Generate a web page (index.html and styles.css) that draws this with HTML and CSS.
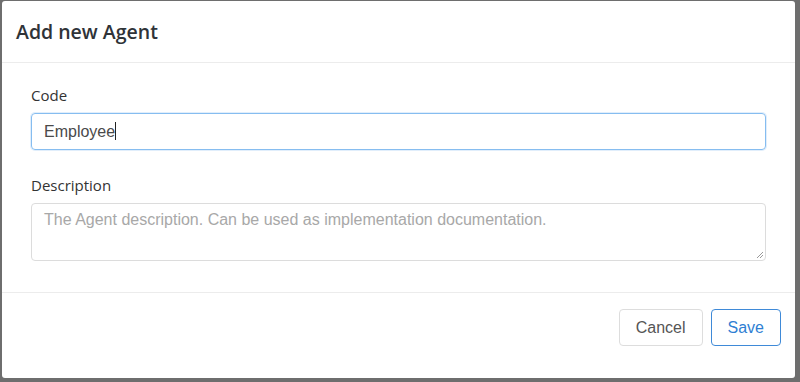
FILE: index.html
```html
<!DOCTYPE html>
<html lang="en">
<head>
<meta charset="utf-8">
<title>Add new Agent</title>
<link rel="stylesheet" href="styles.css">
</head>
<body>

<div class="modal">
	<div class="modal-header">
		<h5 class="modal-title">Add new Agent</h5>
	</div>
	<div class="modal-body">
		<div class="field">
			<label class="field-label">Code</label>
			<div class="input focus">Employee<span class="caret"></span></div>
		</div>
		<div class="field">
			<label class="field-label">Description</label>
			<div class="textarea">
				<span class="placeholder">The Agent description. Can be used as implementation documentation.</span>
				<svg class="grip" width="9" height="9" viewBox="0 0 9 9"><path d="M8 2 L2 8 M8 5 L5 8" stroke="#999" stroke-width="1"/></svg>
			</div>
		</div>
	</div>
	<div class="modal-footer">
		<button class="btn btn-cancel">Cancel</button>
		<button class="btn btn-save">Save</button>
	</div>
</div>

</body>
</html>
```

FILE: styles.css
```css
html, body {
  margin:0; padding:0;
  width:800px; height:382px;
  background-color:#6e6e6e;
  overflow:hidden;
}
body {
  display:flex; align-items:flex-start;
  padding:1px 5px 4px 2px;
  box-sizing:border-box;
}

.modal {
  width:793px; height:377px;
  background-color:#ffffff;
  border-radius:3px;
  display:flex; flex-direction:column;
  font-family:"Open Sans", "Noto Sans", sans-serif;
  color:#333333;
}

.modal-header {
  height:61px;
  border-bottom:1px solid #ececec;
  display:flex; align-items:center;
  padding:0 14px;
}
.modal-title {
  margin:0;
  font-size:19.5px; font-weight:600;
  color:#2f3338;
}

.modal-body {
  flex:1;
  padding:22px 29px 0 29px;
}
.field { margin-bottom:25px; }
.field-label {
  display:block;
  font-size:15px;
  margin-bottom:8px;
  color:#333333;
}

.input, .textarea {
  box-sizing:border-box;
  width:735px;
  border:1px solid #dcdcdc;
  border-radius:4px;
  padding:0 12px;
  font-family:"Liberation Sans", Arial, sans-serif;
  font-size:16px;
}
.input {
  height:37px; line-height:35px;
  color:#4a4a4a;
}
.input.focus {
  border-color:#86bdf0;
  box-shadow:0 0 0 1px rgba(134,189,240,0.25);
}
.caret {
  display:inline-block;
  width:1px; height:18px;
  background-color:#222;
  vertical-align:-3px;
}
.textarea {
  position:relative;
  height:58px;
  padding-top:7px;
}
.placeholder {
  color:#a8a8a8;
}
.grip {
  position:absolute; right:1px; bottom:1px;
}

.modal-footer {
  height:86px;
  border-top:1px solid #ececec;
  display:flex; align-items:flex-start; justify-content:flex-end;
  gap:8px;
  padding:16px 14px 0 0;
  box-sizing:border-box;
}
.btn {
  height:37px;
  padding:0 16px;
  border-radius:4px;
  background-color:#ffffff;
  font-family:"Liberation Sans", Arial, sans-serif;
  font-size:16px;
}
.btn-cancel {
  border:1px solid #dddddd;
  color:#555555;
}
.btn-save {
  border:1px solid #3f8ad8;
  color:#2f7fd3;
}
```
